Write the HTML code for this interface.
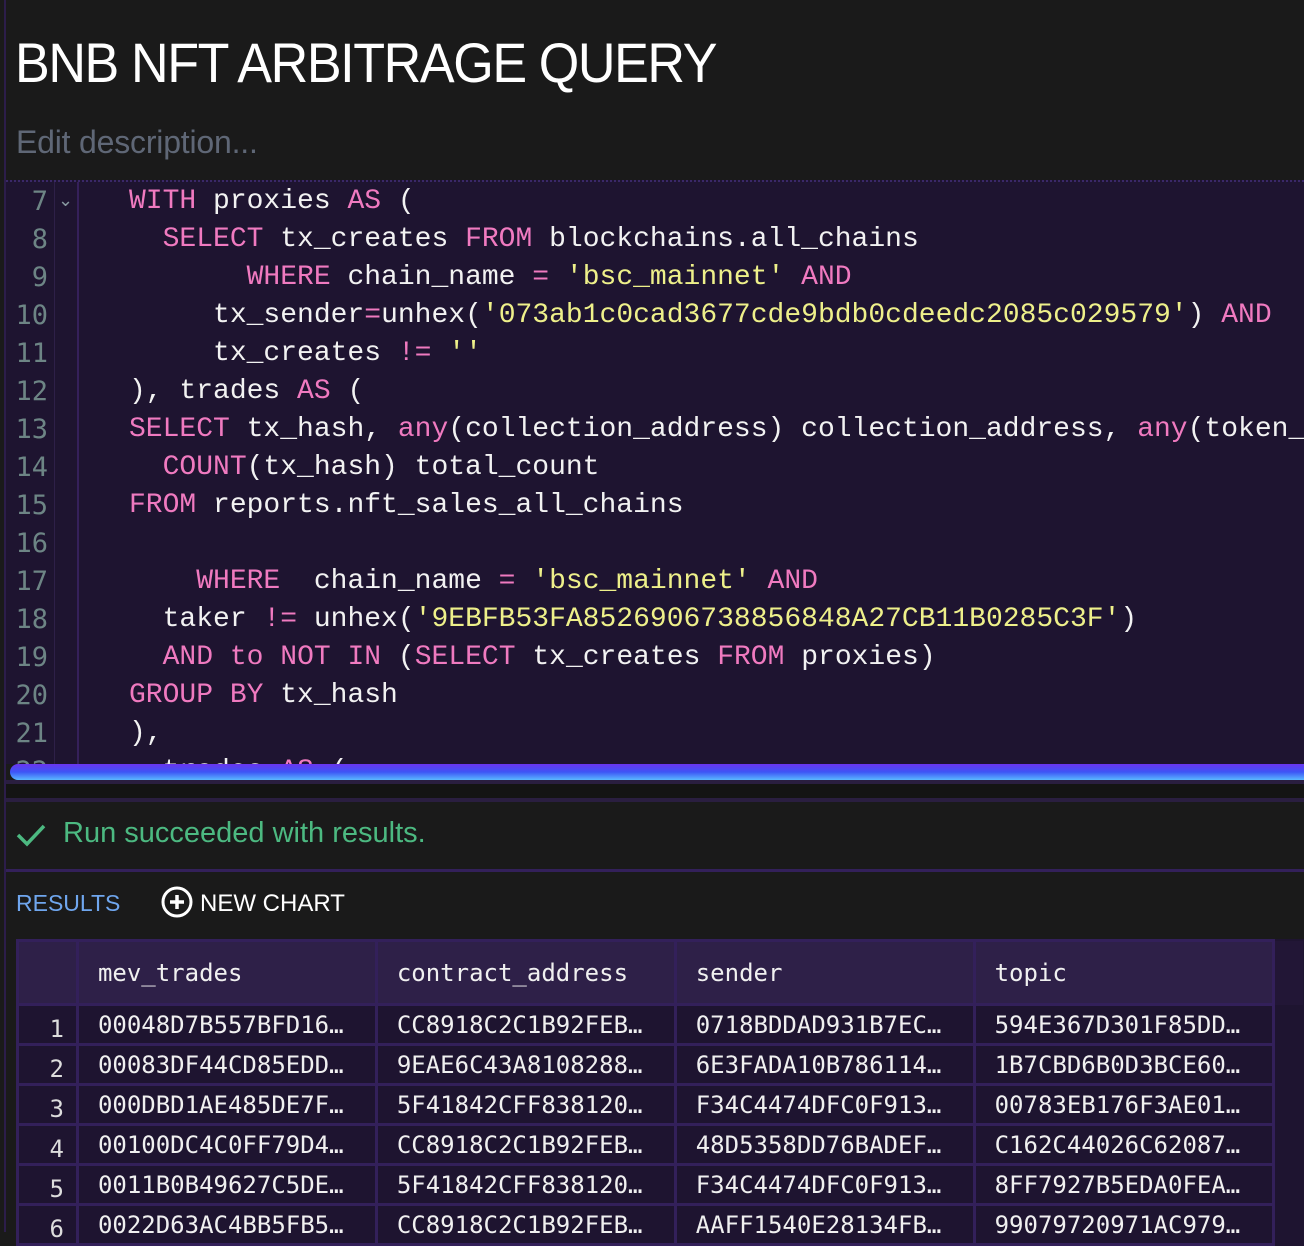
<!DOCTYPE html>
<html><head><meta charset="utf-8"><style>
*{margin:0;padding:0;box-sizing:border-box}
body{width:1304px;height:1232px;overflow:hidden;background:#1a1a1a;font-family:"Liberation Sans",sans-serif;position:relative}
.lb{position:absolute;left:4px;top:0;width:2px;height:1232px;background:#2c1d4a}
.title{position:absolute;left:15px;top:30px;font-size:56px;color:#fff;letter-spacing:-1.5px;font-weight:normal;white-space:nowrap;transform:scaleX(0.93);transform-origin:0 0}
.desc{position:absolute;left:16px;top:124px;font-size:32px;color:#5f6776;letter-spacing:-0.2px}
.code{position:absolute;left:6px;top:180px;width:1298px;height:584px;background:#1e1430;border-top:2px dotted #3a2868;overflow:hidden}
.sep1{position:absolute;left:48px;top:0;width:1px;height:100%;background:#2e2048}
.sep2{position:absolute;left:71px;top:0;width:2px;height:100%;background:#35205a}
.ln{position:absolute;left:0;width:42px;text-align:right;font:27px "DejaVu Sans Mono","Liberation Mono",monospace;color:#6d8585}
.cl{position:absolute;left:123px;white-space:pre;font:28px "Liberation Mono",monospace;color:#f2f2f2}
.k{color:#f07ac0}.s{color:#eef08a}
.bar{position:absolute;left:10px;top:764px;width:1294px;height:16px;border-radius:8px 0 0 8px;background:linear-gradient(#6a35f0,#3d55f5 50%,#5ab8ff)}
.dot{position:absolute;left:6px;top:780px;width:1298px;height:4px;background:#2a1e40}
.g1{position:absolute;left:6px;top:784px;width:1298px;height:14px;background:#141414}
.l1{position:absolute;left:6px;top:798px;width:1298px;height:4px;background:#2a1e40}
.ok{position:absolute;left:63px;top:817px;font-size:29px;color:#4cb981}
.l2{position:absolute;left:6px;top:869px;width:1298px;height:3px;background:#33205a}
.res{position:absolute;left:16px;top:890px;font-size:23px;color:#6fa6ee}
.nc{position:absolute;left:200px;top:890px;font-size:24px;color:#fff}
table{position:absolute;left:16px;top:939px;border-collapse:collapse;font:24px "DejaVu Sans Mono","Liberation Mono",monospace;color:#f0f0f0;background:#1e1430}
td{border:3px solid #33205a;height:40px;padding:0 0 0 19px;white-space:nowrap;width:301px}
td.n{width:62px;text-align:right;padding:0 12px 0 0;color:#ddd;vertical-align:bottom}
tr.h td{height:64px;background:#2e2048}
tr.h td.x{background:#221636;width:30px;border-right:none}
td.x{border:none;width:30px;background:#1e1430}
</style></head><body>
<div class="lb"></div>
<div class="title">BNB NFT ARBITRAGE QUERY</div>
<div class="desc">Edit description...</div>
<div class="code">
<div class="sep1"></div><div class="sep2"></div>
<div class="ln" style="top:4px">7</div><div class="ln" style="top:42px">8</div><div class="ln" style="top:80px">9</div><div class="ln" style="top:118px">10</div><div class="ln" style="top:156px">11</div><div class="ln" style="top:194px">12</div><div class="ln" style="top:232px">13</div><div class="ln" style="top:270px">14</div><div class="ln" style="top:308px">15</div><div class="ln" style="top:346px">16</div><div class="ln" style="top:384px">17</div><div class="ln" style="top:422px">18</div><div class="ln" style="top:460px">19</div><div class="ln" style="top:498px">20</div><div class="ln" style="top:536px">21</div><div class="ln" style="top:574px">22</div>
<div style="position:absolute;left:52px;top:8px;color:#8899a0;font-size:18px">&#8964;</div>
<div class="cl" style="top:4px"><span class="k">WITH</span> proxies <span class="k">AS</span> (</div>
<div class="cl" style="top:42px">  <span class="k">SELECT</span> tx_creates <span class="k">FROM</span> blockchains.all_chains</div>
<div class="cl" style="top:80px">       <span class="k">WHERE</span> chain_name <span class="k">=</span> <span class="s">'bsc_mainnet'</span> <span class="k">AND</span></div>
<div class="cl" style="top:118px">     tx_sender<span class="k">=</span>unhex(<span class="s">'073ab1c0cad3677cde9bdb0cdeedc2085c029579'</span>) <span class="k">AND</span></div>
<div class="cl" style="top:156px">     tx_creates <span class="k">!=</span> <span class="s">''</span></div>
<div class="cl" style="top:194px">), trades <span class="k">AS</span> (</div>
<div class="cl" style="top:232px"><span class="k">SELECT</span> tx_hash, <span class="k">any</span>(collection_address) collection_address, <span class="k">any</span>(token_</div>
<div class="cl" style="top:270px">  <span class="k">COUNT</span>(tx_hash) total_count</div>
<div class="cl" style="top:308px"><span class="k">FROM</span> reports.nft_sales_all_chains</div>
<div class="cl" style="top:384px">    <span class="k">WHERE</span>  chain_name <span class="k">=</span> <span class="s">'bsc_mainnet'</span> <span class="k">AND</span></div>
<div class="cl" style="top:422px">  taker <span class="k">!=</span> unhex(<span class="s">'9EBFB53FA8526906738856848A27CB11B0285C3F'</span>)</div>
<div class="cl" style="top:460px">  <span class="k">AND</span> <span class="k">to</span> <span class="k">NOT</span> <span class="k">IN</span> (<span class="k">SELECT</span> tx_creates <span class="k">FROM</span> proxies)</div>
<div class="cl" style="top:498px"><span class="k">GROUP</span> <span class="k">BY</span> tx_hash</div>
<div class="cl" style="top:536px">),</div>
<div class="cl" style="top:574px">  trades <span class="k">AS</span> (</div>
</div>
<div class="bar"></div><div class="dot"></div><div class="g1"></div><div class="l1"></div>
<svg style="position:absolute;left:16px;top:822px" width="30" height="26" viewBox="0 0 30 26"><path d="M2 13 L11 22 L28 4" stroke="#4cb981" stroke-width="3.5" fill="none"/></svg>
<div class="ok">Run succeeded with results.</div>
<div class="l2"></div>
<div class="res">RESULTS</div>
<svg style="position:absolute;left:161px;top:886px" width="32" height="32" viewBox="0 0 32 32"><circle cx="16" cy="16" r="14" stroke="#fff" stroke-width="3" fill="none"/><path d="M16 9v14M9 16h14" stroke="#fff" stroke-width="3.5"/></svg>
<div class="nc">NEW CHART</div>
<table>
<tr class="h"><td class="n"></td><td>mev_trades</td><td>contract_address</td><td>sender</td><td>topic</td><td class="x"></td></tr>
<tr><td class="n">1</td><td>00048D7B557BFD16…</td><td>CC8918C2C1B92FEB…</td><td>0718BDDAD931B7EC…</td><td>594E367D301F85DD…</td><td class="x"></td></tr>
<tr><td class="n">2</td><td>00083DF44CD85EDD…</td><td>9EAE6C43A8108288…</td><td>6E3FADA10B786114…</td><td>1B7CBD6B0D3BCE60…</td><td class="x"></td></tr>
<tr><td class="n">3</td><td>000DBD1AE485DE7F…</td><td>5F41842CFF838120…</td><td>F34C4474DFC0F913…</td><td>00783EB176F3AE01…</td><td class="x"></td></tr>
<tr><td class="n">4</td><td>00100DC4C0FF79D4…</td><td>CC8918C2C1B92FEB…</td><td>48D5358DD76BADEF…</td><td>C162C44026C62087…</td><td class="x"></td></tr>
<tr><td class="n">5</td><td>0011B0B49627C5DE…</td><td>5F41842CFF838120…</td><td>F34C4474DFC0F913…</td><td>8FF7927B5EDA0FEA…</td><td class="x"></td></tr>
<tr><td class="n">6</td><td>0022D63AC4BB5FB5…</td><td>CC8918C2C1B92FEB…</td><td>AAFF1540E28134FB…</td><td>99079720971AC979…</td><td class="x"></td></tr>
</table>
</body></html>
